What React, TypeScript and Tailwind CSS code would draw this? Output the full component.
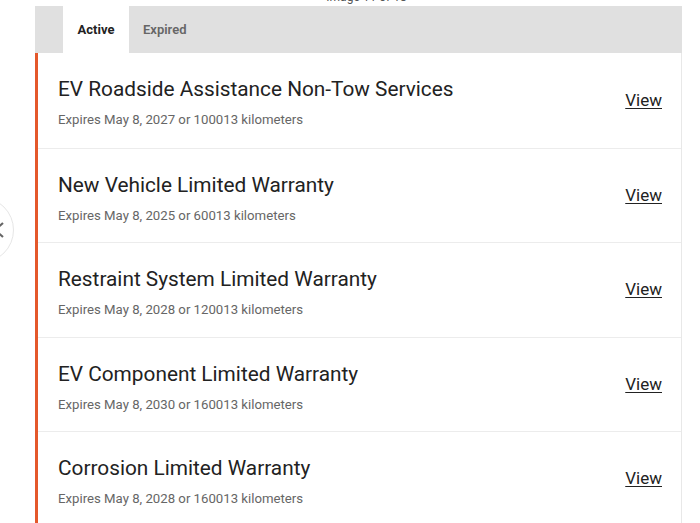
import React from 'react';

type Coverage = {
    title: string;
    expires: string;
};

const coverages: Coverage[] = [
    { title: 'EV Roadside Assistance Non-Tow Services', expires: 'Expires May 8, 2027 or 100013 kilometers' },
    { title: 'New Vehicle Limited Warranty', expires: 'Expires May 8, 2025 or 60013 kilometers' },
    { title: 'Restraint System Limited Warranty', expires: 'Expires May 8, 2028 or 120013 kilometers' },
    { title: 'EV Component Limited Warranty', expires: 'Expires May 8, 2030 or 160013 kilometers' },
    { title: 'Corrosion Limited Warranty', expires: 'Expires May 8, 2028 or 160013 kilometers' },
];

export default function App() {
    return (
        <div
            className="relative w-[700px] h-[523px] overflow-hidden bg-white"
            style={{ fontFamily: 'Roboto, "Liberation Sans", sans-serif' }}
        >
            {/* Carousel prev button, mostly off screen */}
            <div className="absolute left-[-52px] top-[197px] w-[66px] h-[66px] rounded-full border border-[#e6e6e6] bg-white flex items-center justify-end pr-[8px]">
                <svg width="12" height="18" viewBox="0 0 12 18" fill="none">
                    <path d="M10 2 L2 9 L10 16" stroke="#666" strokeWidth="2.2" />
                </svg>
            </div>

            <div className="ml-[35px] w-[647px]">
                {/* caption cut off at the top */}
                <div className="h-[6px] flex justify-center">
                    <span className="-mt-[10px] pl-[16px] text-[12px] leading-[14px] text-[#555]">Image 11 of 18</span>
                </div>

                {/* Tabs */}
                <div className="h-[47px] bg-[#e0e0e0] flex pl-[28px]">
                    <button className="w-[66px] h-full bg-white text-[13px] font-bold text-[#222] flex items-center justify-center">
                        Active
                    </button>
                    <button className="h-full px-[14px] text-[13px] font-semibold text-[#666] flex items-center">
                        Expired
                    </button>
                </div>

                {/* Coverage list */}
                <div className="border-l-[3px] border-[#e4582b] border-r border-r-[#e8e8e8]">
                    {coverages.map((c, i) => (
                        <div
                            key={c.title}
                            className={`h-[94.6px] flex justify-between pl-[20px] pr-[19px] ${i > 0 ? 'border-t border-[#ececec]' : ''}`}
                        >
                            <div className="flex flex-col pt-[22px]">
                                <span className="text-[20.8px] leading-[28px] text-[#222]">{c.title}</span>
                                <span className="mt-[8px] text-[13.2px] leading-[18px] text-[#666]">{c.expires}</span>
                            </div>
                            <a href="#" className="self-center text-[17px] text-[#222] underline underline-offset-2">
                                View
                            </a>
                        </div>
                    ))}
                </div>
            </div>
        </div>
    );
}
